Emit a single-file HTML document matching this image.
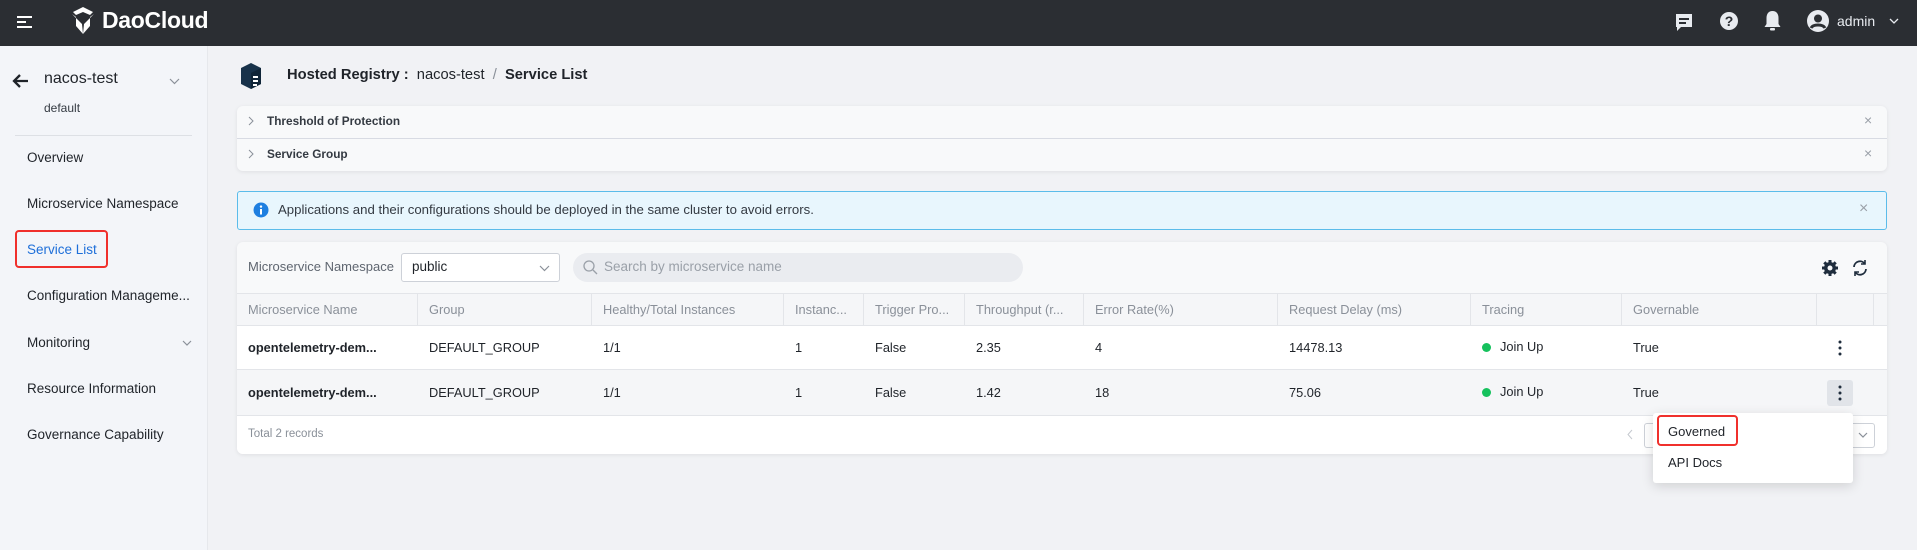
<!DOCTYPE html>
<html><head><meta charset="utf-8"><style>
*{box-sizing:border-box;margin:0;padding:0}
body{width:1917px;height:550px;overflow:hidden;background:#f1f2f5;font-family:"Liberation Sans",sans-serif;color:#1f2329;position:relative;font-size:13px}
.a{position:absolute}
.top{left:0;top:0;width:1917px;height:46px;background:#2b2e33}
.side{left:0;top:46px;width:208px;height:504px;background:#f3f5f9;border-right:1px solid #e6e8ec}
.menu{left:27px;font-size:13.5px;color:#1f2329}
.card{background:#f8f9fa;border-radius:6px;box-shadow:0 1px 4px rgba(0,0,0,.08)}
.th{top:293px;height:33px;line-height:33px;color:#8a9099;font-size:12.8px;padding-left:11px;border-right:1px solid #e3e5e9}
.td{font-size:12.8px;color:#1f2329}
</style></head><body>
<div class="a top"></div>
<div class="a" style="left:17px;top:16px;width:15px;height:2px;background:#fff"></div>
<div class="a" style="left:17px;top:21px;width:9px;height:2px;background:#fff"></div>
<div class="a" style="left:17px;top:26px;width:15px;height:2px;background:#fff"></div>
<svg class="a" style="left:70px;top:6px" width="26" height="29" viewBox="0 0 26 29"><path d="M13 1L3 6l3 3 7-3 7 3 3-3z M2 8l4 3v9l7 8-1-10-5-5z M24 8l-4 3v9l-7 8 1-10 5-5z" fill="#fff"/></svg>
<div class="a" style="left:102px;top:7px;color:#fff;font-size:23px;font-weight:bold;letter-spacing:-.3px">DaoCloud</div>
<svg class="a" style="left:1674px;top:12px" width="20" height="20" viewBox="0 0 20 20"><path d="M2 2h16v13H7l-4 4v-4H2z" fill="#e8ebf0"/><rect x="5" y="6" width="10" height="2" fill="#2b2e33"/><rect x="5" y="10" width="7" height="2" fill="#2b2e33"/></svg>
<svg class="a" style="left:1719px;top:11px" width="20" height="20" viewBox="0 0 20 20"><circle cx="10" cy="10" r="9" fill="#e8ebf0"/><text x="10" y="15" font-size="14" font-weight="bold" text-anchor="middle" fill="#2b2e33" font-family="Liberation Sans">?</text></svg>
<svg class="a" style="left:1763px;top:10px" width="19" height="22" viewBox="0 0 19 22"><path d="M9.5 1c-4 0-6 3-6 7v6l-2 3h16l-2-3V8c0-4-2-7-6-7z" fill="#e8ebf0"/><rect x="7" y="18" width="5" height="2.5" rx="1" fill="#e8ebf0"/></svg>
<svg class="a" style="left:1806px;top:9px" width="24" height="24" viewBox="0 0 24 24"><circle cx="12" cy="12" r="11" fill="#e8ebf0"/><circle cx="12" cy="9.5" r="4" fill="#2b2e33"/><path d="M5 19c2-4 12-4 14 0" stroke="#2b2e33" stroke-width="3" fill="none"/></svg>
<div class="a" style="left:1837px;top:13px;color:#e8ebf0;font-size:14px">admin</div>
<svg class="a" style="left:1889px;top:18px" width="10" height="6"><path d="M1 1l4 4 4-4" stroke="#e8ebf0" fill="none" stroke-width="1.3"/></svg>

<div class="a side"></div>
<svg class="a" style="left:11px;top:73px" width="18" height="16" viewBox="0 0 18 16"><path d="M17 8H3M9 2L3 8l6 6" stroke="#1f2329" stroke-width="2.3" fill="none"/></svg>
<div class="a" style="left:44px;top:70px;font-size:16px">nacos-test</div>
<svg class="a" style="left:169px;top:78px" width="11" height="7"><path d="M1 1l4.5 4.5L10 1" stroke="#8a9099" fill="none" stroke-width="1.2"/></svg>
<div class="a" style="left:44px;top:101px;font-size:12px;color:#343a42">default</div>
<div class="a" style="left:15px;top:135px;width:177px;height:1px;background:#dde0e5"></div>
<div class="a menu" style="top:150px">Overview</div>
<div class="a menu" style="top:196px">Microservice Namespace</div>
<div class="a menu" style="top:242px;color:#1e6fd9">Service List</div>
<div class="a" style="left:15px;top:230px;width:93px;height:38px;border:2px solid #f0302c;border-radius:4px"></div>
<div class="a menu" style="top:288px">Configuration Manageme...</div>
<div class="a menu" style="top:335px">Monitoring</div>
<svg class="a" style="left:182px;top:340px" width="10" height="6"><path d="M1 1l4 4 4-4" stroke="#8a9099" fill="none" stroke-width="1.2"/></svg>
<div class="a menu" style="top:381px">Resource Information</div>
<div class="a menu" style="top:427px">Governance Capability</div>

<svg class="a" style="left:239px;top:62px" width="24" height="28" viewBox="0 0 24 28"><path d="M12 1L2 6v16l10 5 10-5V6z" fill="#18324a"/><path d="M12 11l10-5v16l-10 5z" fill="#102538"/><path d="M14 14h5v2h-5zM14 18h5v2h-5zM14 22h4v2h-4z" fill="#fff"/></svg>
<div class="a" style="left:287px;top:67px;font-size:14.7px"><b>Hosted Registry :</b>&nbsp; nacos-test &nbsp;<span style="color:#8a9099">/</span>&nbsp; <b>Service List</b></div>

<div class="a card" style="left:237px;top:106px;width:1650px;height:65px"></div>
<div class="a" style="left:237px;top:138px;width:1650px;height:1px;background:#d8dbe3"></div>
<svg class="a" style="left:248px;top:116px" width="6" height="10"><path d="M1 1l4 4-4 4" stroke="#8a9099" fill="none"/></svg>
<svg class="a" style="left:248px;top:149px" width="6" height="10"><path d="M1 1l4 4-4 4" stroke="#8a9099" fill="none"/></svg>
<div class="a" style="left:267px;top:114px;font-size:11.8px;font-weight:bold;color:#343a42">Threshold of Protection</div>
<div class="a" style="left:267px;top:147px;font-size:11.8px;font-weight:bold;color:#343a42">Service Group</div>
<div class="a" style="left:1864px;top:112px;color:#9aa0a8;font-size:14px">×</div>
<div class="a" style="left:1864px;top:145px;color:#9aa0a8;font-size:14px">×</div>

<div class="a" style="left:237px;top:191px;width:1650px;height:39px;background:#e8f6fd;border:1px solid #5bbcea;border-radius:3px"></div>
<svg class="a" style="left:253px;top:202px" width="16" height="16"><circle cx="8" cy="8" r="7.5" fill="#1e7fe0"/><rect x="7" y="7" width="2" height="5.5" fill="#fff"/><circle cx="8" cy="4.6" r="1.2" fill="#fff"/></svg>
<div class="a" style="left:278px;top:202px;font-size:13.2px;color:#343a42">Applications and their configurations should be deployed in the same cluster to avoid errors.</div>
<div class="a" style="left:1859px;top:200px;color:#9aa0a8;font-size:16px">×</div>

<div class="a card" style="left:237px;top:242px;width:1650px;height:212px"></div>
<div class="a" style="left:248px;top:259px;color:#5f6670;font-size:13px">Microservice Namespace</div>
<div class="a" style="left:401px;top:253px;width:159px;height:29px;background:#fff;border:1px solid #cdd1d8;border-radius:3px"></div>
<div class="a" style="left:412px;top:259px;font-size:13.5px">public</div>
<svg class="a" style="left:539px;top:265px" width="11" height="7"><path d="M1 1l4.5 4.5L10 1" stroke="#8a9099" fill="none" stroke-width="1.2"/></svg>
<div class="a" style="left:573px;top:253px;width:450px;height:29px;background:#eaecf0;border-radius:15px"></div>
<svg class="a" style="left:583px;top:260px" width="15" height="15"><circle cx="6" cy="6" r="5" stroke="#9aa0a8" fill="none" stroke-width="1.3"/><path d="M10 10l4 4" stroke="#9aa0a8" stroke-width="1.3"/></svg>
<div class="a" style="left:604px;top:259px;color:#9aa0a8;font-size:13.5px">Search by microservice name</div>
<svg class="a" style="left:1821px;top:259px" width="18" height="18" viewBox="0 0 18 18"><circle cx="9" cy="9" r="6" fill="#1f2d3d"/><g stroke="#1f2d3d" stroke-width="3"><path d="M9 1v16M1 9h16M3.3 3.3l11.4 11.4M14.7 3.3L3.3 14.7"/></g><circle cx="9" cy="9" r="2.5" fill="#f8f9fa"/></svg>
<svg class="a" style="left:1851px;top:259px" width="18" height="18" viewBox="0 0 18 18"><path d="M3 8a6 6 0 0 1 11-3M15 10a6 6 0 0 1-11 3" stroke="#1f2d3d" stroke-width="1.8" fill="none"/><path d="M14 1v4h-4M4 17v-4h4" stroke="#1f2d3d" stroke-width="1.6" fill="none"/></svg>

<div class="a" style="left:237px;top:293px;width:1650px;height:33px;background:#f5f6f8;border-top:1px solid #e3e5e9;border-bottom:1px solid #e3e5e9"></div>
<div class="a th" style="left:237px;width:181px">Microservice Name</div>
<div class="a th" style="left:418px;width:174px">Group</div>
<div class="a th" style="left:592px;width:192px">Healthy/Total Instances</div>
<div class="a th" style="left:784px;width:80px">Instanc...</div>
<div class="a th" style="left:864px;width:101px">Trigger Pro...</div>
<div class="a th" style="left:965px;width:119px">Throughput (r...</div>
<div class="a th" style="left:1084px;width:194px">Error Rate(%)</div>
<div class="a th" style="left:1278px;width:193px">Request Delay (ms)</div>
<div class="a th" style="left:1471px;width:151px">Tracing</div>
<div class="a th" style="left:1622px;width:195px">Governable</div>
<div class="a th" style="left:1817px;width:57px"></div>

<div class="a" style="left:237px;top:326px;width:1650px;height:44px;background:#fff;border-bottom:1px solid #e3e5e9"></div>
<div class="a" style="left:237px;top:370px;width:1650px;height:46px;background:#f5f6f8;border-bottom:1px solid #e3e5e9"></div>
<div class="a" style="left:237px;top:416px;width:1650px;height:38px;background:#fff;border-radius:0 0 6px 6px"></div>

<div class="a td" style="top:340px;left:248px;font-weight:bold">opentelemetry-dem...</div>
<div class="a td" style="top:340px;left:429px">DEFAULT_GROUP</div>
<div class="a td" style="top:340px;left:603px">1/1</div>
<div class="a td" style="top:340px;left:795px">1</div>
<div class="a td" style="top:340px;left:875px">False</div>
<div class="a td" style="top:340px;left:976px">2.35</div>
<div class="a td" style="top:340px;left:1095px">4</div>
<div class="a td" style="top:340px;left:1289px">14478.13</div>
<div class="a" style="top:343px;left:1482px;width:9px;height:9px;border-radius:50%;background:#16c15d"></div>
<div class="a td" style="top:339px;left:1500px">Join Up</div>
<div class="a td" style="top:340px;left:1633px">True</div>
<svg class="a" style="left:1838px;top:340px" width="4" height="16"><circle cx="2" cy="2" r="1.5" fill="#1f2d3d"/><circle cx="2" cy="8" r="1.5" fill="#1f2d3d"/><circle cx="2" cy="14" r="1.5" fill="#1f2d3d"/></svg>

<div class="a td" style="top:385px;left:248px;font-weight:bold">opentelemetry-dem...</div>
<div class="a td" style="top:385px;left:429px">DEFAULT_GROUP</div>
<div class="a td" style="top:385px;left:603px">1/1</div>
<div class="a td" style="top:385px;left:795px">1</div>
<div class="a td" style="top:385px;left:875px">False</div>
<div class="a td" style="top:385px;left:976px">1.42</div>
<div class="a td" style="top:385px;left:1095px">18</div>
<div class="a td" style="top:385px;left:1289px">75.06</div>
<div class="a" style="top:388px;left:1482px;width:9px;height:9px;border-radius:50%;background:#16c15d"></div>
<div class="a td" style="top:384px;left:1500px">Join Up</div>
<div class="a td" style="top:385px;left:1633px">True</div>
<div class="a" style="left:1827px;top:380px;width:26px;height:26px;background:#e1e4e9;border-radius:3px"></div>
<svg class="a" style="left:1838px;top:385px" width="4" height="16"><circle cx="2" cy="2" r="1.5" fill="#1f2d3d"/><circle cx="2" cy="8" r="1.5" fill="#1f2d3d"/><circle cx="2" cy="14" r="1.5" fill="#1f2d3d"/></svg>

<div class="a" style="left:248px;top:428px;font-size:11.5px;color:#8a9099">Total 2 records</div>
<svg class="a" style="left:1627px;top:429px" width="6" height="11"><path d="M5 1L1 5.5 5 10" stroke="#c5c9cf" fill="none"/></svg>
<div class="a" style="left:1644px;top:423px;width:231px;height:25px;border:1px solid #cdd1d8;border-radius:3px;background:#fff"></div>
<svg class="a" style="left:1858px;top:432px" width="10" height="6"><path d="M1 1l4 4 4-4" stroke="#8a9099" fill="none" stroke-width="1.2"/></svg>

<div class="a" style="left:1653px;top:413px;width:200px;height:70px;background:#fff;border-radius:3px;box-shadow:0 3px 12px rgba(0,0,0,.14)"></div>
<div class="a" style="left:1657px;top:415px;width:81px;height:31px;border:2px solid #f0302c;border-radius:4px"></div>
<div class="a" style="left:1668px;top:424px;font-size:13px">Governed</div>
<div class="a" style="left:1668px;top:455px;font-size:13px">API Docs</div>
</body></html>
